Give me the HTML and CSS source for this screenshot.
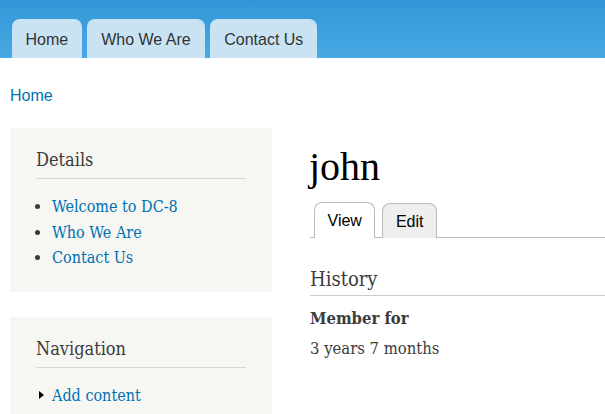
FILE: index.html
```html
<!DOCTYPE html>
<html>
<head>
<meta charset="utf-8">
<link rel="stylesheet" href="styles.css">
</head>
<body>
<header class="header">
  <nav class="main-menu">
    <a class="menu-tab tab-home" href="#">Home</a>
    <a class="menu-tab tab-who" href="#">Who We Are</a>
    <a class="menu-tab tab-contact" href="#">Contact Us</a>
  </nav>
</header>
<div class="breadcrumb"><a href="#">Home</a></div>
<div class="layout">
  <aside class="sidebar">
    <section class="block">
      <h2 class="block-title">Details</h2>
      <ul class="block-list">
        <li><a href="#">Welcome to DC-8</a></li>
        <li><a href="#">Who We Are</a></li>
        <li><a href="#">Contact Us</a></li>
      </ul>
    </section>
    <section class="block">
      <h2 class="block-title">Navigation</h2>
      <ul class="nav-list">
        <li><a href="#">Add content</a></li>
      </ul>
    </section>
  </aside>
  <main class="content">
    <h1 class="page-title">john</h1>
    <div class="tabs">
      <a class="tab active" href="#">View</a>
      <a class="tab" href="#">Edit</a>
    </div>
    <h3 class="section-title">History</h3>
    <div class="label">Member for</div>
    <div class="value">3 years 7 months</div>
  </main>
</div>
</body>
</html>
```
FILE: styles.css
```css
* { box-sizing: border-box; }
html, body { margin: 0; padding: 0; }
body {
  font-family: "DejaVu Serif Condensed", "DejaVu Serif", Georgia, serif;
  font-stretch: condensed;
  color: #3b3b3b;
  background: #fff;
  width: 605px;
  height: 414px;
  overflow: hidden;
}
a { text-decoration: none; color: #0071b3; }

.header {
  height: 58px;
  background: linear-gradient(to bottom, #3296d6 0%, #48a9e4 100%);
  display: flex;
  align-items: flex-end;
  padding-left: 12px;
}
.main-menu { display: flex; gap: 5px; }
.menu-tab {
  font-family: "Liberation Sans", Arial, sans-serif;
  font-stretch: normal;
  font-size: 16px;
  color: #333;
  background: #c9e3f5;
  height: 39px;
  line-height: 41px;
  padding: 0 13px;
  border-radius: 8px 8px 0 0;
}
.tab-home { padding: 0 13.5px; }
.tab-who { padding: 0 14.5px; }
.tab-contact { padding: 0 14px; }

.breadcrumb {
  font-family: "Liberation Sans", Arial, sans-serif;
  font-stretch: normal;
  font-size: 16px;
  padding: 29px 0 0 10px;
  height: 70px;
}

.layout { display: flex; }
.sidebar {
  width: 262px;
  margin-left: 10px;
  display: flex;
  flex-direction: column;
  gap: 25px;
}
.block {
  background: #f6f6f2;
  padding: 21px 26px 21px 26px;
}
.block-title {
  font-weight: normal;
  font-size: 18px;
  line-height: 22px;
  color: #3b3b3b;
  margin: 0;
  padding-bottom: 7px;
  border-bottom: 1px solid #d6d6d6;
}
.block-list {
  margin: 15px 0 0 0;
  padding: 0 0 0 16px;
  font-size: 16px;
  line-height: 25.5px;
  list-style: disc;
  color: #3b3b3b;
}
.nav-list {
  margin: 15px 0 0 0;
  padding: 0 0 0 16px;
  font-size: 16px;
  line-height: 25.5px;
  list-style: none;
}
.nav-list li { position: relative; }
.nav-list li::before {
  content: "";
  position: absolute;
  left: -13px;
  top: 8px;
  border-left: 5px solid #000;
  border-top: 4.5px solid transparent;
  border-bottom: 4.5px solid transparent;
}

.content {
  flex: 1;
  margin-left: 38px;
}
.page-title {
  font-family: "Liberation Serif", "Times New Roman", serif;
  font-stretch: normal;
  font-weight: normal;
  font-size: 40px;
  color: #000;
  margin: 16px 0 0 -1px;
  line-height: 46px;
}
.tabs {
  display: flex;
  gap: 7px;
  padding-left: 4px;
  border-bottom: 1px solid #bbb;
  margin-top: 12px;
}
.tab {
  font-family: "Liberation Sans", Arial, sans-serif;
  font-stretch: normal;
  font-size: 16px;
  color: #000;
  background: #eee;
  border: 1px solid #bbb;
  border-bottom: none;
  border-radius: 8px 8px 0 0;
  padding: 0 12.5px;
  height: 35px;
  line-height: 35px;
  margin-bottom: -1px;
  align-self: flex-end;
}
.tab.active {
  background: #fff;
  padding: 0 12.5px;
  height: 36px;
}
.section-title {
  font-weight: normal;
  font-size: 20px;
  line-height: 24px;
  color: #3b3b3b;
  margin: 29px 0 0 0;
  padding-bottom: 4px;
  border-bottom: 1px solid #ccc;
}
.label {
  font-weight: bold;
  font-size: 16.5px;
  line-height: 22px;
  margin-top: 12px;
}
.value {
  font-size: 16.5px;
  line-height: 22px;
  margin-top: 8px;
}
```
